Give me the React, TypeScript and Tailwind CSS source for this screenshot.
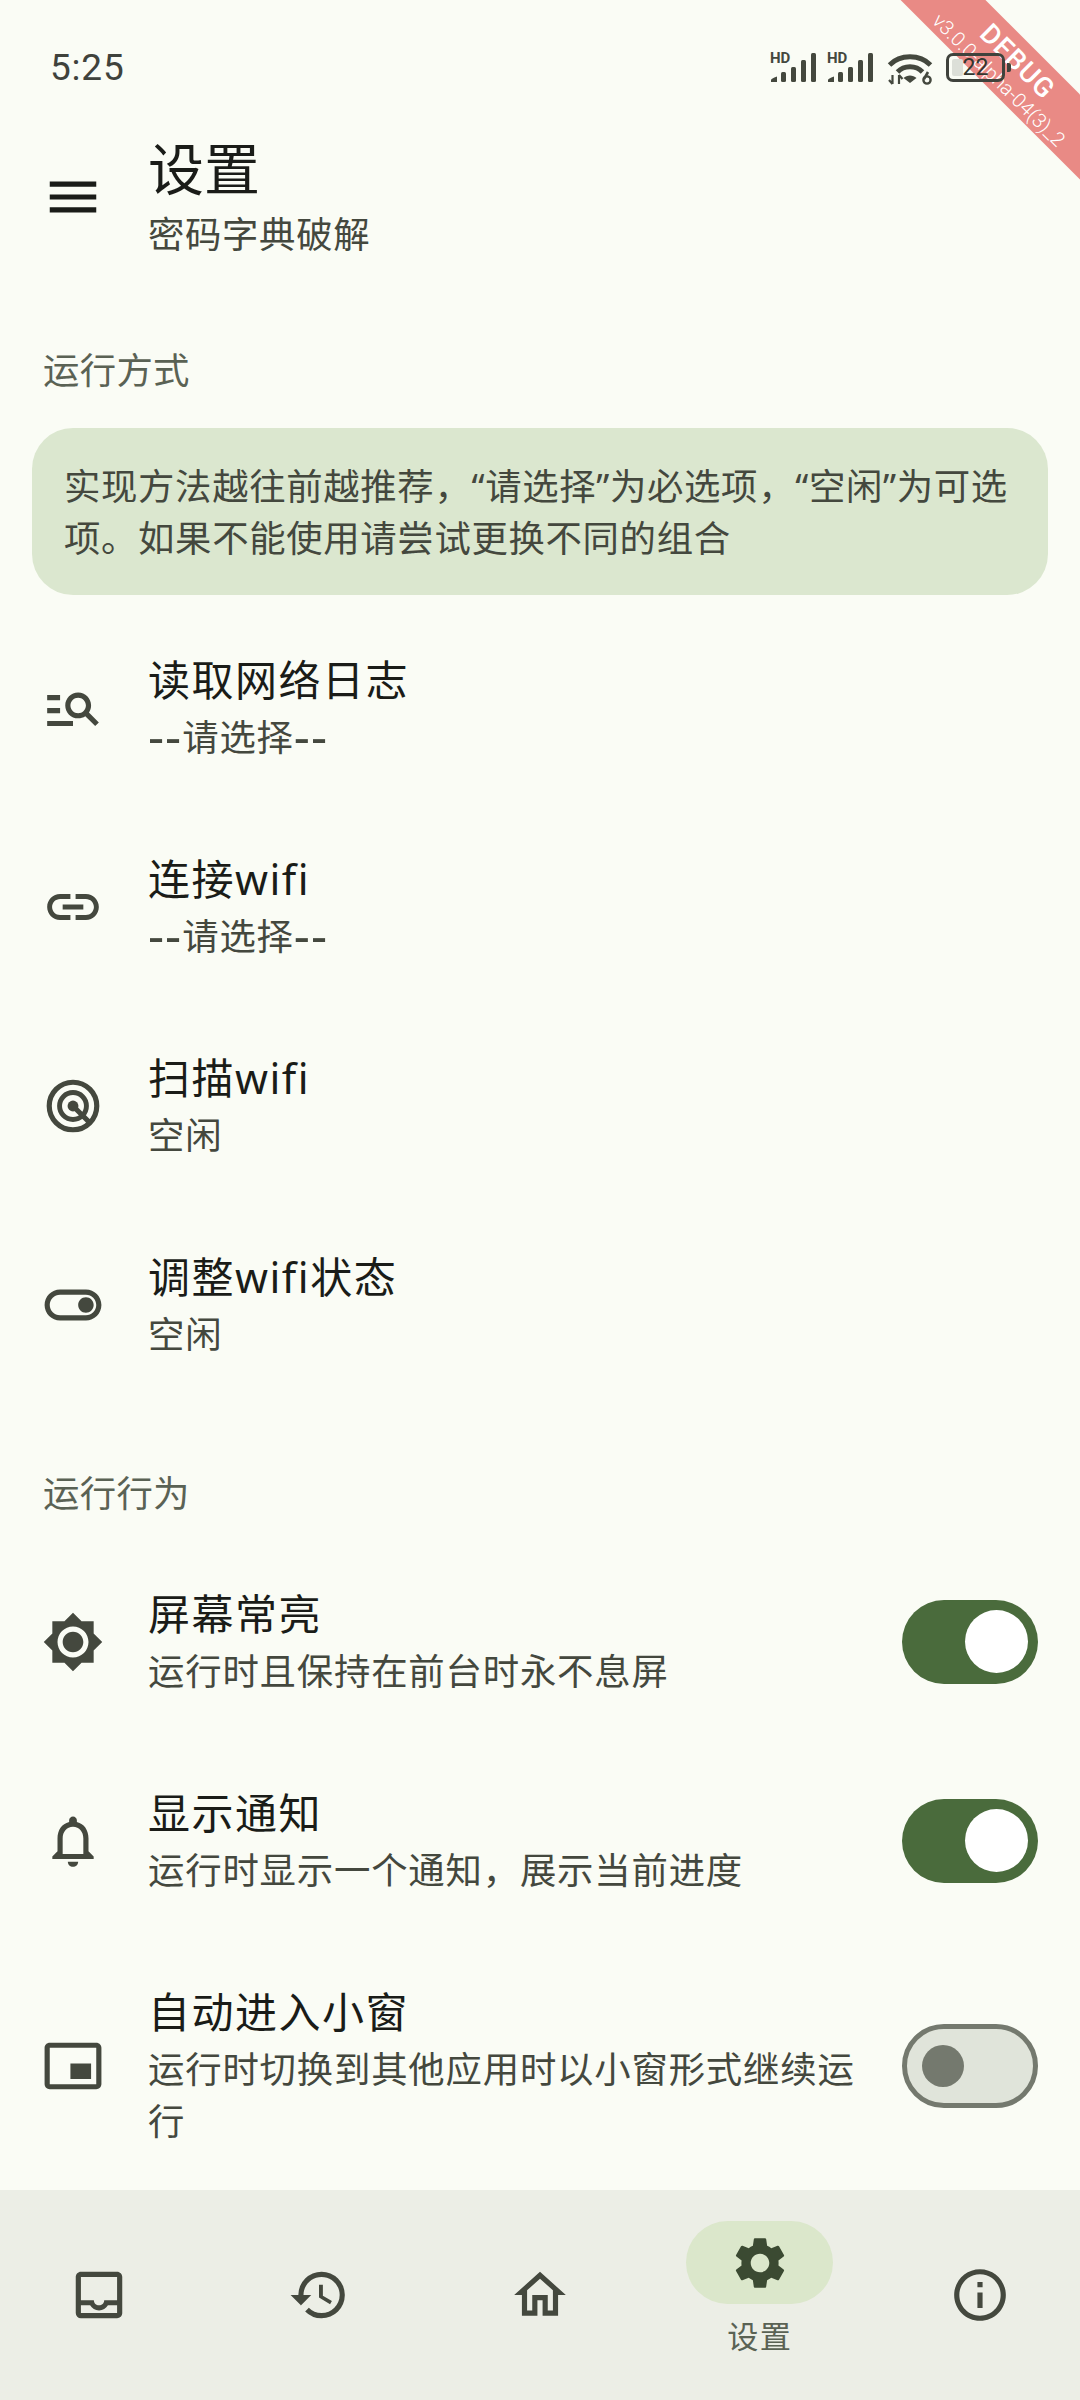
import React from "react";
import {
  MdMenu, MdManageSearch, MdLink, MdOutlineToggleOn, MdBrightness7,
  MdOutlineNotifications, MdPictureInPictureAlt, MdOutlineInbox, MdHistory, MdOutlineHome,
  MdSettings, MdInfoOutline,
} from "react-icons/md";

const font = "font-['Noto_Sans','Noto_Sans_CJK_SC',sans-serif]";

function Signal() {
  return (
    <div className="relative w-[47px] h-[30px]">
      <span className="absolute left-0 top-[-3px] text-[15px] leading-[16px] font-bold font-['Roboto',sans-serif] text-[#44483e]">HD</span>
      <svg width="47" height="30" viewBox="0 0 47 30" className="absolute left-0 top-0">
        <g fill="#44483e">
          <path d="M1 29 V27 Q1 25.5 7 23.5 V29 Z" />
          <rect x="11" y="19" width="5" height="10" rx="1.5" />
          <rect x="21" y="14" width="5" height="15" rx="1.5" />
          <rect x="31" y="7" width="5" height="22" rx="1.5" />
          <rect x="41" y="0" width="5" height="29" rx="1.5" />
        </g>
      </svg>
    </div>
  );
}

function Wifi() {
  return (
    <svg width="46" height="35" viewBox="0 0 46 35">
      <g fill="none" stroke="#44483e" strokeWidth="4.8" strokeLinecap="butt">
        <path d="M2.5 14 C13 3 33 3 43.5 14" />
        <path d="M10.5 21 C17 14 29 14 35.5 21" />
      </g>
      <path d="M16.5 27 C20 23.5 26 23.5 29.5 27 L23 32 Z" fill="#44483e" />
      <path d="M5.5 24 v9 M2 29 l3.5 4 M12 24 v9 M12 24 l3.5 4" stroke="#44483e" strokeWidth="2.2" fill="none" />
      <circle cx="40" cy="29" r="3.6" fill="none" stroke="#44483e" strokeWidth="2.4" />
      <path d="M37 28 L41 21" stroke="#44483e" strokeWidth="2.6" />
    </svg>
  );
}

function Battery() {
  return (
    <div className="flex items-center">
      <div className="relative w-[59px] h-[29px] rounded-[7px] border-[3px] border-[#3f423c] flex items-center justify-center">
        <div className="absolute left-[3px] top-[3px] bottom-[3px] w-[11px] rounded-[2px] bg-[#dcdfd8]" />
        <span className="relative text-[23px] leading-none font-['Roboto',sans-serif] text-[#33362f]">22</span>
      </div>
      <div className="ml-[2px] w-[4px] h-[9px] rounded-r-[2px] bg-[#3f423c]" />
    </div>
  );
}

function TrackIcon() {
  return (
    <svg width="62" height="62" viewBox="0 0 24 24" fill="none" stroke="#44483e">
      <circle cx="12" cy="12" r="9.2" strokeWidth="2" />
      <circle cx="12" cy="12" r="5.2" strokeWidth="1.9" />
      <circle cx="12" cy="12" r="2.1" fill="#44483e" stroke="none" />
      <path d="M12 12 L18.4 18.4" strokeWidth="2" />
    </svg>
  );
}

type RowProps = { icon: React.ReactNode; title: string; sub: React.ReactNode; toggle?: "on" | "off" };

function Toggle({ state }: { state: "on" | "off" }) {
  if (state === "on")
    return (
      <div className="w-[136px] h-[84px] rounded-full bg-[#4a6b3c] flex items-center justify-end pr-[10px] shrink-0">
        <div className="w-[63px] h-[63px] rounded-full bg-white" />
      </div>
    );
  return (
    <div className="w-[136px] h-[84px] rounded-full bg-[#e0e4da] border-[5px] border-[#74796e] flex items-center pl-[15px] shrink-0">
      <div className="w-[42px] h-[42px] rounded-full bg-[#74796e]" />
    </div>
  );
}

function Row({ icon, title, sub, toggle }: RowProps) {
  return (
    <div className="flex items-center pl-[42px] pr-[42px]">
      <div className="w-[62px] h-[62px] shrink-0 text-[#44483e] flex items-center justify-center">{icon}</div>
      <div className="flex-1 min-w-0 ml-[44px] mr-[40px] pt-[42px] pb-[44px]">
        <div className="h-[60px] leading-[60px] text-[42px] tracking-[1.5px] text-[#1a1c18]">{title}</div>
        <div className="mt-[1px] text-[36.4px] leading-[52px] tracking-[0.8px] text-[#44483e]">{sub}</div>
      </div>
      {toggle && <Toggle state={toggle} />}
    </div>
  );
}

function Dashed() {
  return (
    <span>
      <span className="text-[50px] leading-[0px] tracking-[1px] align-[-3px]">--</span>请选择<span className="text-[50px] leading-[0px] tracking-[1px] align-[-3px]">--</span>
    </span>
  );
}

function NavIcon({ children }: { children: React.ReactNode }) {
  return (
    <div className="w-[178px] flex flex-col items-center pt-[74px] text-[#44483e]">{children}</div>
  );
}

export default function App() {
  return (
    <div className={`relative w-[1080px] h-[2400px] overflow-hidden flex flex-col bg-[#fafcf5] ${font}`}>
      {/* status bar */}
      <div className="relative z-10 h-[96px] shrink-0 flex items-start justify-between pl-[50px] pr-[69px] pt-[45px]">
        <span className="text-[37px] leading-[46px] text-[#3f423c] font-['Roboto',sans-serif] tracking-[0.8px]">5:25</span>
        <div className="flex items-start pt-[8px]">
          <Signal />
          <div className="ml-[10px]"><Signal /></div>
          <div className="ml-[13px] mt-[-2px]"><Wifi /></div>
          <div className="ml-[13px]"><Battery /></div>
        </div>
      </div>

      <div className="flex-1 min-h-0 overflow-hidden">
        {/* header */}
        <div className="flex items-center pl-[42px] pt-[38px]">
          <MdMenu size={62} className="text-[#1a1c18] shrink-0" />
          <div className="ml-[44px]">
            <div className="text-[56px] leading-[68px] text-[#1a1c18]">设置</div>
            <div className="mt-[6px] text-[36.4px] leading-[52px] tracking-[0.65px] text-[#44483e]">密码字典破解</div>
          </div>
        </div>

        <div className="mt-[84px] ml-[43px] text-[36.4px] leading-[52px] tracking-[0.3px] text-[#5a6254]">运行方式</div>

        <div className="mt-[32px] mx-[32px] h-[167px] rounded-[41px] bg-[#dbe7cf] px-[32px] flex items-center">
          <p className="text-[36.4px] leading-[52px] tracking-[0.65px] text-[#44483e]">
            实现方法越往前越推荐，“请选择”为必选项，“空闲”为可选项。如果不能使用请尝试更换不同的组合
          </p>
        </div>

        <div className="mt-[13px]">
          <Row icon={<MdManageSearch size={62} />} title="读取网络日志" sub={<Dashed />} />
          <Row icon={<MdLink size={62} />} title="连接wifi" sub={<Dashed />} />
          <Row icon={<TrackIcon />} title="扫描wifi" sub="空闲" />
          <Row icon={<MdOutlineToggleOn size={68} />} title="调整wifi状态" sub="空闲" />
        </div>

        <div className="mt-[63px] ml-[43px] text-[36.4px] leading-[52px] tracking-[0.3px] text-[#5a6254]">运行行为</div>

        <div className="mt-[23px]">
          <Row icon={<MdBrightness7 size={62} />} title="屏幕常亮" sub="运行时且保持在前台时永不息屏" toggle="on" />
          <Row icon={<MdOutlineNotifications size={62} />} title="显示通知" sub="运行时显示一个通知，展示当前进度" toggle="on" />
          <Row icon={<MdPictureInPictureAlt size={62} />} title="自动进入小窗" sub="运行时切换到其他应用时以小窗形式继续运行" toggle="off" />
        </div>
      </div>

      {/* bottom navigation */}
      <div className="h-[210px] shrink-0 bg-[#eceee6] flex justify-between pl-[10px] pr-[11px]">
        <NavIcon><MdOutlineInbox size={62} /></NavIcon>
        <NavIcon><MdHistory size={62} /></NavIcon>
        <NavIcon><MdOutlineHome size={62} /></NavIcon>
        <div className="w-[178px] flex flex-col items-center pt-[31px]">
          <div className="w-[147px] h-[83px] rounded-full bg-[#dbe7cb] flex items-center justify-center text-[#3b4a32]">
            <MdSettings size={62} />
          </div>
          <div className="mt-[12px] h-[40px] leading-[40px] text-[31.2px] tracking-[1.3px] text-[#5a6254]">设置</div>
        </div>
        <NavIcon><MdInfoOutline size={62} /></NavIcon>
      </div>

      {/* debug banner */}
      <div className="absolute left-[861px] top-[38px] w-[300px] h-[60px] rotate-45 bg-[#e98a85] flex flex-col items-center text-white">
        <span className="mt-[4px] h-[34px] leading-[34px] text-[27.5px] font-medium tracking-[1px] font-['Roboto',sans-serif]">DEBUG</span>
        <span className="mt-[-3px] leading-[24px] text-[20px] font-light whitespace-nowrap font-['Roboto',sans-serif]">v3.0.0-alpha-04(3)_2</span>
      </div>
    </div>
  );
}
